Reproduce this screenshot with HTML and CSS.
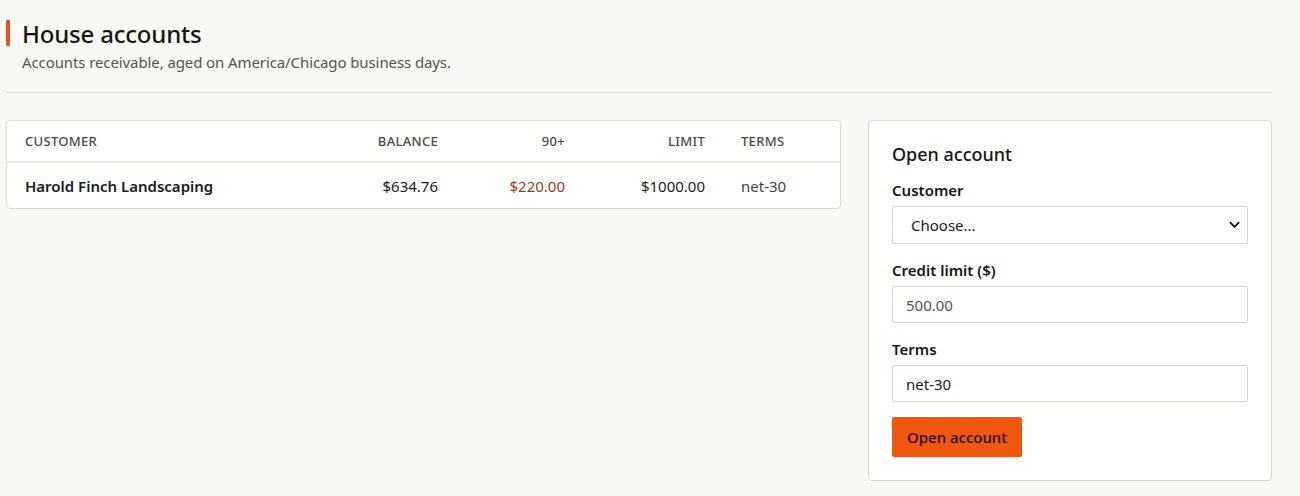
FILE: index.html
```html
<!DOCTYPE html>
<html lang="en">
<head>
<meta charset="utf-8">
<title>House accounts</title>
<link rel="stylesheet" href="styles.css">
</head>
<body>
<main class="page">
  <header class="page-head">
    <h1 class="title">House accounts</h1>
    <p class="subtitle">Accounts receivable, aged on America/Chicago business days.</p>
  </header>
  <div class="layout">
    <section class="card table-card">
      <table class="accounts">
        <thead>
          <tr>
            <th class="c-customer">Customer</th>
            <th class="num c-balance">Balance</th>
            <th class="num c-aged">90+</th>
            <th class="num c-limit">Limit</th>
            <th class="c-terms">Terms</th>
          </tr>
        </thead>
        <tbody>
          <tr>
            <td class="name">Harold Finch Landscaping</td>
            <td class="num">$634.76</td>
            <td class="num overdue">$220.00</td>
            <td class="num">$1000.00</td>
            <td class="terms">net-30</td>
          </tr>
        </tbody>
      </table>
    </section>
    <aside class="card form-card">
      <h2 class="form-title">Open account</h2>
      <form class="form">
        <label class="field">
          <span class="label">Customer</span>
          <span class="select-wrap">
            <select class="control select">
              <option>Choose...</option>
            </select>
            <svg class="chev" viewBox="0 0 12 8" width="11" height="8"><path d="M1.5 1.5 L6 6 L10.5 1.5" fill="none" stroke="#111" stroke-width="2" stroke-linecap="round" stroke-linejoin="round"/></svg>
          </span>
        </label>
        <label class="field">
          <span class="label">Credit limit ($)</span>
          <input class="control muted" type="text" value="500.00">
        </label>
        <label class="field">
          <span class="label">Terms</span>
          <input class="control" type="text" value="net-30">
        </label>
        <button class="btn" type="button">Open account</button>
      </form>
    </aside>
  </div>
</main>
</body>
</html>
```

FILE: styles.css
```css
* { box-sizing: border-box; }
html, body { margin: 0; padding: 0; }
body {
  background: #f8f8f4;
  font-family: "Noto Sans", "Open Sans", sans-serif;
  color: #1b1b18;
}
.page {
  padding: 18px 28px 0 6px;
}
.page-head {
  position: relative;
  padding-left: 16px;
}
.page-head::before {
  content: "";
  position: absolute;
  left: 0;
  top: 2px;
  width: 4px;
  height: 26px;
  background: #e8541b;
  border-radius: 1px;
}
.title {
  margin: 0;
  font-size: 24px;
  font-weight: 500;
  line-height: 32px;
  letter-spacing: -0.2px;
  color: #161613;
}
.subtitle {
  margin: 2px 0 0;
  font-size: 15px;
  line-height: 20px;
  color: #55554f;
  letter-spacing: -0.1px;
}
.layout {
  margin-top: 20px;
  border-top: 1px solid #dcdcd6;
  padding-top: 27px;
  display: flex;
  gap: 27px;
  align-items: flex-start;
}
.card {
  background: #fff;
  border: 1px solid #dcdcd6;
  border-radius: 4px;
}
.table-card {
  flex: 0 0 835px;
  overflow: hidden;
}
.accounts {
  width: 100%;
  border-collapse: collapse;
  font-size: 15px;
}
.accounts th {
  height: 41px;
  font-size: 13px;
  font-weight: 500;
  text-transform: uppercase;
  color: #4a4a44;
  text-align: left;
  letter-spacing: 0.3px;
  border-bottom: 2px solid #ececE7;
  padding: 0 18px;
}
.accounts td {
  height: 46px;
  padding: 0 18px;
  color: #1b1b18;
}
.accounts .num { text-align: right; }
.c-balance { width: 150px; }
.c-aged { width: 127px; }
.c-limit { width: 140px; }
.c-terms { width: 117px; }
.accounts .name { font-weight: 600; }
.accounts .overdue { color: #9a3a24; }
.accounts .terms { color: #44443f; }

.form-card {
  flex: 0 0 404px;
  padding: 20px 23px 23px;
}
.form-title {
  margin: 0 0 13px;
  font-size: 18px;
  font-weight: 500;
  line-height: 26px;
  color: #161613;
}
.form { display: flex; flex-direction: column; }
.field { display: flex; flex-direction: column; margin-bottom: 16px; }
.label {
  font-size: 15px;
  font-weight: 600;
  line-height: 20px;
  margin-bottom: 6px;
  color: #161613;
}
.select-wrap { position: relative; display: block; }
.control {
  width: 100%;
  height: 37px;
  border: 1px solid #d8d8d2;
  border-radius: 2px;
  background: #fff;
  font-family: inherit;
  font-size: 15px;
  color: #1b1b18;
  padding: 0 13px;
  outline: none;
}
.select {
  height: 38px;
  -webkit-appearance: none;
  appearance: none;
  padding-left: 18px;
}
.chev {
  position: absolute;
  right: 8px;
  top: 15px;
  pointer-events: none;
}
.muted { color: #55554f; }
.btn {
  align-self: flex-start;
  margin-top: -1px;
  height: 40px;
  padding: 0 15px;
  background: #f0560f;
  color: #2a0c02;
  border: none;
  border-radius: 2px;
  font-family: inherit;
  font-size: 15px;
  font-weight: 500;
}
```
